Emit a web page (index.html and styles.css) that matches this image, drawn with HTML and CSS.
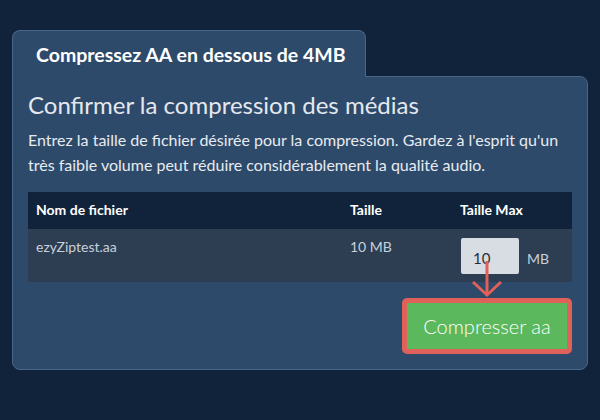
FILE: index.html
```html
<!DOCTYPE html>
<html lang="fr">
<head>
<meta charset="utf-8">
<title>Compression</title>
<link rel="stylesheet" href="styles.css">
</head>
<body>
<div class="wrap">
  <div class="tab">Compressez AA en dessous de 4MB</div>
  <div class="panel">
    <h1 class="title">Confirmer la compression des médias</h1>
    <p class="desc">Entrez la taille de fichier désirée pour la compression. Gardez à l'esprit qu'un très faible volume peut réduire considérablement la qualité audio.</p>
    <table class="files">
      <colgroup><col class="c1"><col class="c2"><col class="c3"></colgroup>
      <thead>
        <tr><th>Nom de fichier</th><th>Taille</th><th>Taille Max</th></tr>
      </thead>
      <tbody>
        <tr>
          <td>ezyZiptest.aa</td>
          <td>10 MB</td>
          <td><div class="maxcell"><input class="maxin" type="text" value="10"><span class="unit">MB</span></div></td>
        </tr>
      </tbody>
    </table>
    <div class="actions">
      <div class="highlight"><button class="go">Compresser aa</button></div>
    </div>
    <svg class="arrow" width="45" height="45" viewBox="0 0 45 45">
      <path d="M22 6 V40" stroke="#e06159" stroke-width="3" fill="none"/>
      <path d="M8 27 L22 40 L36 27" stroke="#e06159" stroke-width="3" fill="none" stroke-linejoin="miter"/>
    </svg>
  </div>
</div>
</body>
</html>
```
FILE: styles.css
```css
html, body {
  margin: 0;
  padding: 0;
  background: #10233a;
  font-family: Lato, "Noto Sans", sans-serif;
}
.wrap {
  padding: 30px 12px 0 12px;
  width: 576px;
}
.tab {
  position: relative;
  z-index: 1;
  width: 329px;
  height: 44px;
  margin-bottom: -1px;
  padding: 2px 0 0 23px;
  box-sizing: content-box;
  background: #2d4a6a;
  border: 1px solid #4a6688;
  border-bottom: none;
  border-radius: 8px 8px 0 0;
  color: #ffffff;
  font-weight: 700;
  font-size: 19.5px;
  line-height: 44px;
}
.panel {
  position: relative;
  background: #2d4a6a;
  border: 1px solid #4a6688;
  border-radius: 0 8px 8px 8px;
  padding: 14px 15px 15px 15px;
}
.title {
  margin: 0;
  font-size: 24px;
  font-weight: 400;
  line-height: 28px;
  color: #e4e8ee;
}
.desc {
  margin: 8px 0 15px 0;
  font-size: 16px;
  line-height: 25px;
  color: #e8ebf0;
}
.files {
  width: 544px;
  border-collapse: collapse;
  table-layout: fixed;
}
.c1 { width: 314px; }
.c2 { width: 110px; }
.c3 { width: 120px; }
.files th {
  background: #10233a;
  color: #ffffff;
  font-weight: 700;
  font-size: 14px;
  text-align: left;
  height: 37px;
  padding: 0 8px 3px 8px;
  box-sizing: border-box;
  vertical-align: middle;
}
.files td {
  background: #2d3e53;
  color: #c9d0d9;
  font-size: 14px;
  height: 53px;
  padding: 9px 8px 0 8px;
  box-sizing: border-box;
  vertical-align: top;
  line-height: 17px;
}
.files td:last-child {
  padding: 9px 8px 8px 9px;
}
.maxcell {
  display: flex;
  align-items: center;
  gap: 8px;
}
.maxin {
  width: 58px;
  height: 36px;
  box-sizing: border-box;
  border: none;
  border-radius: 2px;
  background: #d8dde4;
  color: #2a2f36;
  font-family: Lato, "Noto Sans", sans-serif;
  font-size: 15px;
  padding: 4px 0 0 12px;
  margin: 0;
}
.unit {
  color: #c9d0d9;
  font-size: 14px;
  padding-top: 4px;
}
.actions {
  display: flex;
  justify-content: flex-end;
  margin-top: 16px;
}
.highlight {
  border: 5px solid #e06159;
  border-radius: 5px;
  display: flex;
}
.go {
  width: 160px;
  height: 46px;
  background: #5cb85c;
  border: none;
  color: #ffffff;
  font-family: Lato, "Noto Sans", sans-serif;
  font-weight: 300;
  font-size: 20px;
  padding: 0;
  margin: 0;
}
.arrow {
  position: absolute;
  left: 452px;
  top: 178px;
}
```
